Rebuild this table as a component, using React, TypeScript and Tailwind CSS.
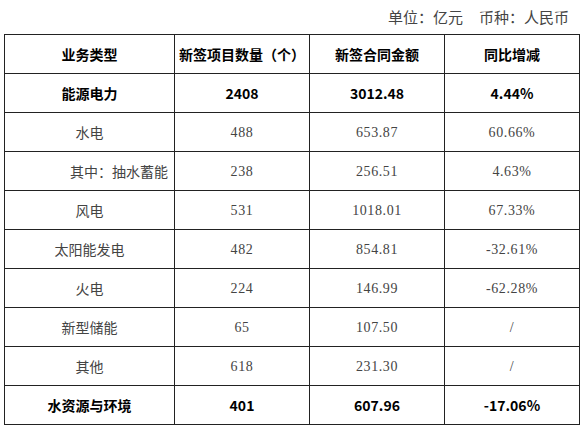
const rows = [
  { name: '能源电力', count: '2408', amount: '3012.48', yoy: '4.44%', bold: true },
  { name: '水电', count: '488', amount: '653.87', yoy: '60.66%' },
  { name: '其中：抽水蓄能', count: '238', amount: '256.51', yoy: '4.63%', indent: true },
  { name: '风电', count: '531', amount: '1018.01', yoy: '67.33%' },
  { name: '太阳能发电', count: '482', amount: '854.81', yoy: '-32.61%' },
  { name: '火电', count: '224', amount: '146.99', yoy: '-62.28%' },
  { name: '新型储能', count: '65', amount: '107.50', yoy: '/' },
  { name: '其他', count: '618', amount: '231.30', yoy: '/' },
  { name: '水资源与环境', count: '401', amount: '607.96', yoy: '-17.06%', bold: true },
];

const cjk = "font-['Noto_Sans_CJK_SC',sans-serif]";
const num = "font-['Liberation_Serif','Noto_Sans_CJK_SC',serif] tracking-[0.6px]";

export default function App() {
  return (
    <div className="w-[584px] h-[429px] bg-white overflow-hidden">
      {/* 单位说明 */}
      <div className={`h-[34px] flex items-center justify-end pr-[15px] pt-[1px] text-[15px] text-[#444] ${cjk}`}>
        <span>单位：亿元</span>
        <span className="ml-[16px]">币种：人民币</span>
      </div>

      <table className="ml-[4px] w-[575px] table-fixed border-collapse">
        <colgroup>
          <col className="w-[170px]" />
          <col className="w-[135px]" />
          <col className="w-[135px]" />
          <col className="w-[135px]" />
        </colgroup>
        <thead>
          <tr className={`h-[39px] text-[14px] font-bold text-black ${cjk}`}>
            <th className="border border-[#222] p-0 text-center">业务类型</th>
            <th className="border border-[#222] p-0 text-center">新签项目数量（个）</th>
            <th className="border border-[#222] p-0 text-center">新签合同金额</th>
            <th className="border border-[#222] p-0 text-center">同比增减</th>
          </tr>
        </thead>
        <tbody>
          {rows.map((r, i) => (
            <tr key={i} className={`h-[39px] text-[14px] ${r.bold ? 'font-bold text-black' : 'text-[#444]'}`}>
              <td
                className={`border border-[#222] p-0 ${cjk} ${r.indent ? 'text-right pr-[6px]' : 'text-center'}`}
              >
                {r.name}
              </td>
              <td className={`border border-[#222] p-0 text-center ${r.bold ? cjk : num}`}>{r.count}</td>
              <td className={`border border-[#222] p-0 text-center ${r.bold ? cjk : num}`}>{r.amount}</td>
              <td className={`border border-[#222] p-0 text-center ${r.bold ? cjk : num}`}>{r.yoy}</td>
            </tr>
          ))}
        </tbody>
      </table>
    </div>
  );
}
